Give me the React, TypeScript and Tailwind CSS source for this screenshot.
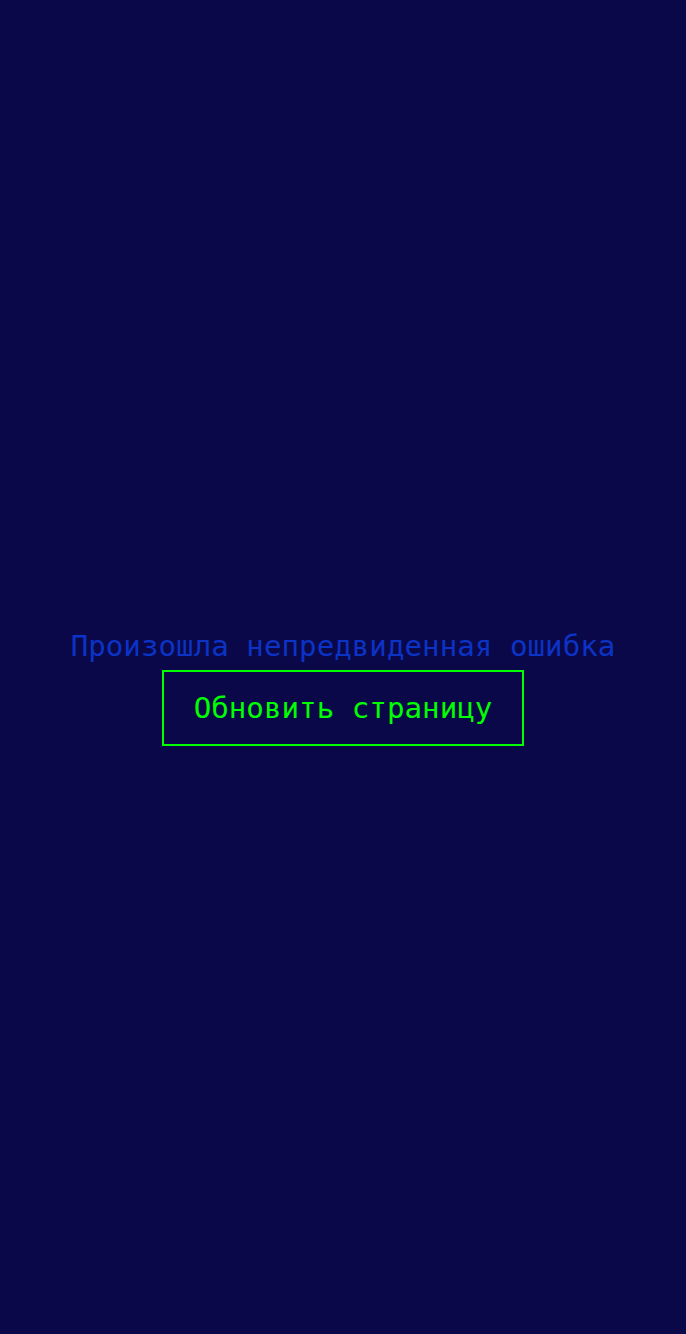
export default function App() {
  return (
    <div className="flex min-h-screen w-full flex-col items-center justify-center bg-[#0a0848] pt-10 font-['DejaVu_Sans_Mono',monospace]">
      <p className="text-[29.2px] leading-[34px] text-[#0b33c6]">Произошла непредвиденная ошибка</p>
      <button
        type="button"
        className="mt-[7px] w-[362px] border-2 border-[#00ff00] py-[19px] text-center text-[29.2px] leading-[34px] text-[#00ff00]"
      >
        Обновить страницу
      </button>
    </div>
  );
}
